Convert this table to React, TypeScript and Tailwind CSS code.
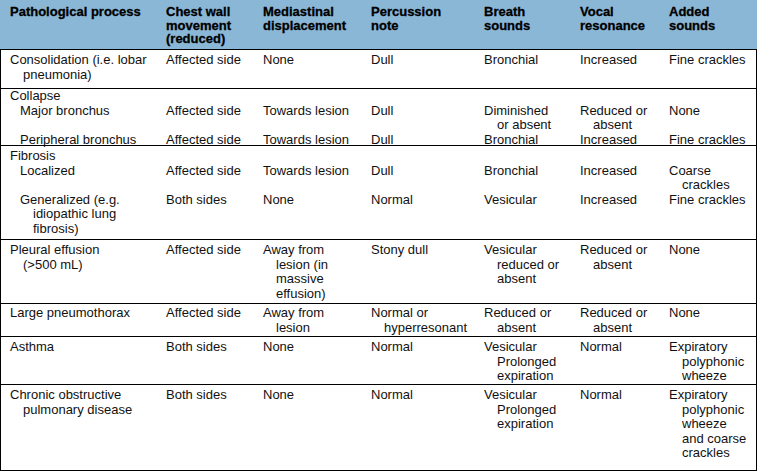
type Cell = string[];

interface SubRow {
  cells: Cell[];
}

interface Row {
  title?: string;
  subs: SubRow[];
  h: string;
  pt: string;
}

const HEAD: Cell[] = [
  ["Pathological process"],
  ["Chest wall", "movement", "(reduced)"],
  ["Mediastinal", "displacement"],
  ["Percussion", "note"],
  ["Breath", "sounds"],
  ["Vocal", "resonance"],
  ["Added", "sounds"],
];

const ROWS: Row[] = [
  {
    h: "h-[39px]",
    pt: "pt-[3px]",
    subs: [
      {
        cells: [
          ["Consolidation (i.e. lobar", "pneumonia)"],
          ["Affected side"],
          ["None"],
          ["Dull"],
          ["Bronchial"],
          ["Increased"],
          ["Fine crackles"],
        ],
      },
    ],
  },
  {
    title: "Collapse",
    h: "h-[57px]",
    pt: "pt-[0px]",
    subs: [
      {
        cells: [
          ["Major bronchus"],
          ["Affected side"],
          ["Towards lesion"],
          ["Dull"],
          ["Diminished", "or absent"],
          ["Reduced or", "absent"],
          ["None"],
        ],
      },
      {
        cells: [
          ["Peripheral bronchus"],
          ["Affected side"],
          ["Towards lesion"],
          ["Dull"],
          ["Bronchial"],
          ["Increased"],
          ["Fine crackles"],
        ],
      },
    ],
  },
  {
    title: "Fibrosis",
    h: "h-[94px]",
    pt: "pt-[3px]",
    subs: [
      {
        cells: [
          ["Localized"],
          ["Affected side"],
          ["Towards lesion"],
          ["Dull"],
          ["Bronchial"],
          ["Increased"],
          ["Coarse", "crackles"],
        ],
      },
      {
        cells: [
          ["Generalized (e.g.", "idiopathic lung", "fibrosis)"],
          ["Both sides"],
          ["None"],
          ["Normal"],
          ["Vesicular"],
          ["Increased"],
          ["Fine crackles"],
        ],
      },
    ],
  },
  {
    h: "h-[64px]",
    pt: "pt-[3px]",
    subs: [
      {
        cells: [
          ["Pleural effusion", "(>500 mL)"],
          ["Affected side"],
          ["Away from", "lesion (in", "massive", "effusion)"],
          ["Stony dull"],
          ["Vesicular", "reduced or", "absent"],
          ["Reduced or", "absent"],
          ["None"],
        ],
      },
    ],
  },
  {
    h: "h-[33px]",
    pt: "pt-[2px]",
    subs: [
      {
        cells: [
          ["Large pneumothorax"],
          ["Affected side"],
          ["Away from", "lesion"],
          ["Normal or", "hyperresonant"],
          ["Reduced or", "absent"],
          ["Reduced or", "absent"],
          ["None"],
        ],
      },
    ],
  },
  {
    h: "h-[48px]",
    pt: "pt-[3px]",
    subs: [
      {
        cells: [
          ["Asthma"],
          ["Both sides"],
          ["None"],
          ["Normal"],
          ["Vesicular", "Prolonged", "expiration"],
          ["Normal"],
          ["Expiratory", "polyphonic", "wheeze"],
        ],
      },
    ],
  },
  {
    h: "h-[86px]",
    pt: "pt-[3px]",
    subs: [
      {
        cells: [
          ["Chronic obstructive", "pulmonary disease"],
          ["Both sides"],
          ["None"],
          ["Normal"],
          ["Vesicular", "Prolonged", "expiration"],
          ["Normal"],
          ["Expiratory", "polyphonic", "wheeze", "and coarse", "crackles"],
        ],
      },
    ],
  },
];

const GRID = "grid grid-cols-[156px_97px_108px_113px_96px_89px_1fr]";

function cn(...parts: (string | false | undefined)[]) {
  return parts.filter(Boolean).join(" ");
}

// first line flush, the rest hang in by 13px like the printed table
function CellLines({ lines, first }: { lines: Cell; first?: string }) {
  return (
    <div className={first}>
      {lines.map((l, i) => (
        <div key={i} className={cn(i > 0 && "pl-[13px]", "whitespace-nowrap")}>
          {l}
        </div>
      ))}
    </div>
  );
}

export default function App() {
  return (
    <div className="w-[758px] h-[472px] bg-white font-['Liberation_Sans',Arial,sans-serif] text-[13px] text-[#111]">
      <div className="w-[757px]">
        {/* header */}
        <div
          className={cn(
            GRID,
            "h-[49px] bg-[#8bb7d6] pl-[10px] pt-[5px] font-bold leading-[13.5px] text-black [-webkit-text-stroke:0.3px_black]",
          )}
        >
          {HEAD.map((c, i) => (
            <div key={i}>
              {c.map((l) => (
                <div key={l} className="whitespace-nowrap">
                  {l}
                </div>
              ))}
            </div>
          ))}
        </div>

        {/* body */}
        <div className="border-x border-b border-black leading-[14.5px]">
          {ROWS.map((row, ri) => (
            <div key={ri} className={cn("border-t border-black pl-[9px]", row.h, row.pt)}>
              {row.title && <div>{row.title}</div>}
              {row.subs.map((s, si) => (
                <div key={si} className={GRID}>
                  {s.cells.map((c, ci) => (
                    <CellLines key={ci} lines={c} first={ci === 0 && row.title ? "pl-[10px]" : undefined} />
                  ))}
                </div>
              ))}
            </div>
          ))}
        </div>
      </div>
    </div>
  );
}
